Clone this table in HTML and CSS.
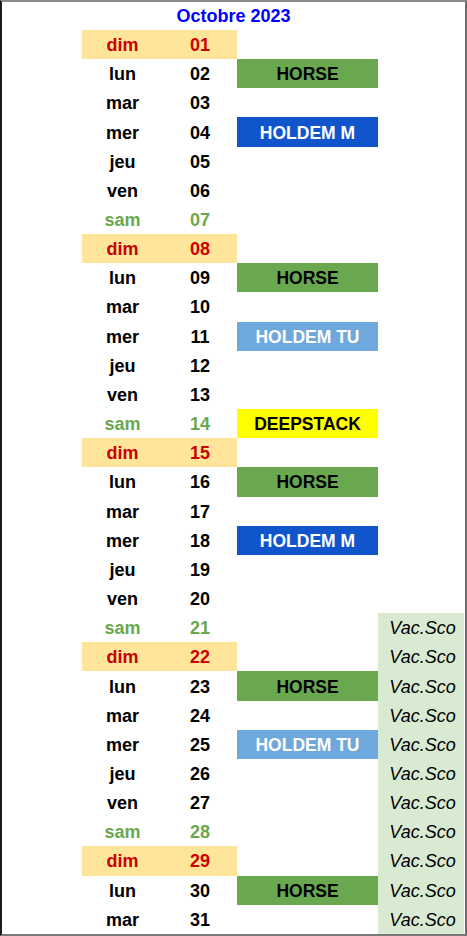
FILE: index.html
```html
<!DOCTYPE html>
<html lang="fr">
<head>
<meta charset="utf-8">
<title>Octobre 2023</title>
<link rel="stylesheet" href="styles.css">
</head>
<body>
<div class="sheet">
  <div class="title">Octobre 2023</div>
  <div class="row sun"><span></span><span class="day">dim</span><span class="num">01</span><span class="ev"></span><span class="vac"></span></div>
  <div class="row"><span></span><span class="day">lun</span><span class="num">02</span><span class="ev horse">HORSE</span><span class="vac"></span></div>
  <div class="row"><span></span><span class="day">mar</span><span class="num">03</span><span class="ev"></span><span class="vac"></span></div>
  <div class="row"><span></span><span class="day">mer</span><span class="num">04</span><span class="ev holdm">HOLDEM M</span><span class="vac"></span></div>
  <div class="row"><span></span><span class="day">jeu</span><span class="num">05</span><span class="ev"></span><span class="vac"></span></div>
  <div class="row"><span></span><span class="day">ven</span><span class="num">06</span><span class="ev"></span><span class="vac"></span></div>
  <div class="row sat"><span></span><span class="day">sam</span><span class="num">07</span><span class="ev"></span><span class="vac"></span></div>
  <div class="row sun"><span></span><span class="day">dim</span><span class="num">08</span><span class="ev"></span><span class="vac"></span></div>
  <div class="row"><span></span><span class="day">lun</span><span class="num">09</span><span class="ev horse">HORSE</span><span class="vac"></span></div>
  <div class="row"><span></span><span class="day">mar</span><span class="num">10</span><span class="ev"></span><span class="vac"></span></div>
  <div class="row"><span></span><span class="day">mer</span><span class="num">11</span><span class="ev holdtu">HOLDEM TU</span><span class="vac"></span></div>
  <div class="row"><span></span><span class="day">jeu</span><span class="num">12</span><span class="ev"></span><span class="vac"></span></div>
  <div class="row"><span></span><span class="day">ven</span><span class="num">13</span><span class="ev"></span><span class="vac"></span></div>
  <div class="row sat"><span></span><span class="day">sam</span><span class="num">14</span><span class="ev deep">DEEPSTACK</span><span class="vac"></span></div>
  <div class="row sun"><span></span><span class="day">dim</span><span class="num">15</span><span class="ev"></span><span class="vac"></span></div>
  <div class="row"><span></span><span class="day">lun</span><span class="num">16</span><span class="ev horse">HORSE</span><span class="vac"></span></div>
  <div class="row"><span></span><span class="day">mar</span><span class="num">17</span><span class="ev"></span><span class="vac"></span></div>
  <div class="row"><span></span><span class="day">mer</span><span class="num">18</span><span class="ev holdm">HOLDEM M</span><span class="vac"></span></div>
  <div class="row"><span></span><span class="day">jeu</span><span class="num">19</span><span class="ev"></span><span class="vac"></span></div>
  <div class="row"><span></span><span class="day">ven</span><span class="num">20</span><span class="ev"></span><span class="vac"></span></div>
  <div class="row sat"><span></span><span class="day">sam</span><span class="num">21</span><span class="ev"></span><span class="vac on">Vac.Sco</span></div>
  <div class="row sun"><span></span><span class="day">dim</span><span class="num">22</span><span class="ev"></span><span class="vac on">Vac.Sco</span></div>
  <div class="row"><span></span><span class="day">lun</span><span class="num">23</span><span class="ev horse">HORSE</span><span class="vac on">Vac.Sco</span></div>
  <div class="row"><span></span><span class="day">mar</span><span class="num">24</span><span class="ev"></span><span class="vac on">Vac.Sco</span></div>
  <div class="row"><span></span><span class="day">mer</span><span class="num">25</span><span class="ev holdtu">HOLDEM TU</span><span class="vac on">Vac.Sco</span></div>
  <div class="row"><span></span><span class="day">jeu</span><span class="num">26</span><span class="ev"></span><span class="vac on">Vac.Sco</span></div>
  <div class="row"><span></span><span class="day">ven</span><span class="num">27</span><span class="ev"></span><span class="vac on">Vac.Sco</span></div>
  <div class="row sat"><span></span><span class="day">sam</span><span class="num">28</span><span class="ev"></span><span class="vac on">Vac.Sco</span></div>
  <div class="row sun"><span></span><span class="day">dim</span><span class="num">29</span><span class="ev"></span><span class="vac on">Vac.Sco</span></div>
  <div class="row"><span></span><span class="day">lun</span><span class="num">30</span><span class="ev horse">HORSE</span><span class="vac on">Vac.Sco</span></div>
  <div class="row"><span></span><span class="day">mar</span><span class="num">31</span><span class="ev"></span><span class="vac on">Vac.Sco</span></div>
</div>
</body>
</html>
```

FILE: styles.css
```css
html, body {
  margin: 0;
  padding: 0;
  background: #ffffff;
}

.sheet {
  width: 463px;
  height: 932px;
  border-left: 2px solid #1c1c1c;
  border-top: 2px solid #8a8a8a;
  border-right: 2px solid #6e6e6e;
  border-bottom: 2px solid #7a7a7a;
  font-family: "Liberation Sans", Arial, sans-serif;
  font-size: 18px;
  font-weight: bold;
  color: #000000;
  display: flex;
  flex-direction: column;
}

.title {
  height: 28px;
  display: flex;
  align-items: center;
  justify-content: center;
  color: #0000ff;
}

.row {
  height: 29.16px;
  display: grid;
  grid-template-columns: 80px 81px 74px 141px 86px;
}

.row > span {
  display: flex;
  align-items: center;
  justify-content: center;
  white-space: nowrap;
  padding-top: 2px;
  box-sizing: border-box;
}

.sun .day, .sun .num {
  background: #ffe599;
  color: #cc0000;
}

.sat .day, .sat .num {
  color: #6aa84f;
}

.ev {
  font-size: 17.5px;
}

.horse {
  background: #6aa84f;
  color: #000000;
}

.holdm {
  background: #1155cc;
  color: #ffffff;
}

.holdtu {
  background: #6fa8dc;
  color: #ffffff;
}

.deep {
  background: #ffff00;
  color: #000000;
}

.vac {
  font-weight: normal;
  font-style: italic;
  padding-left: 3px;
}

.vac.on {
  background: #d9ead3;
}
```
